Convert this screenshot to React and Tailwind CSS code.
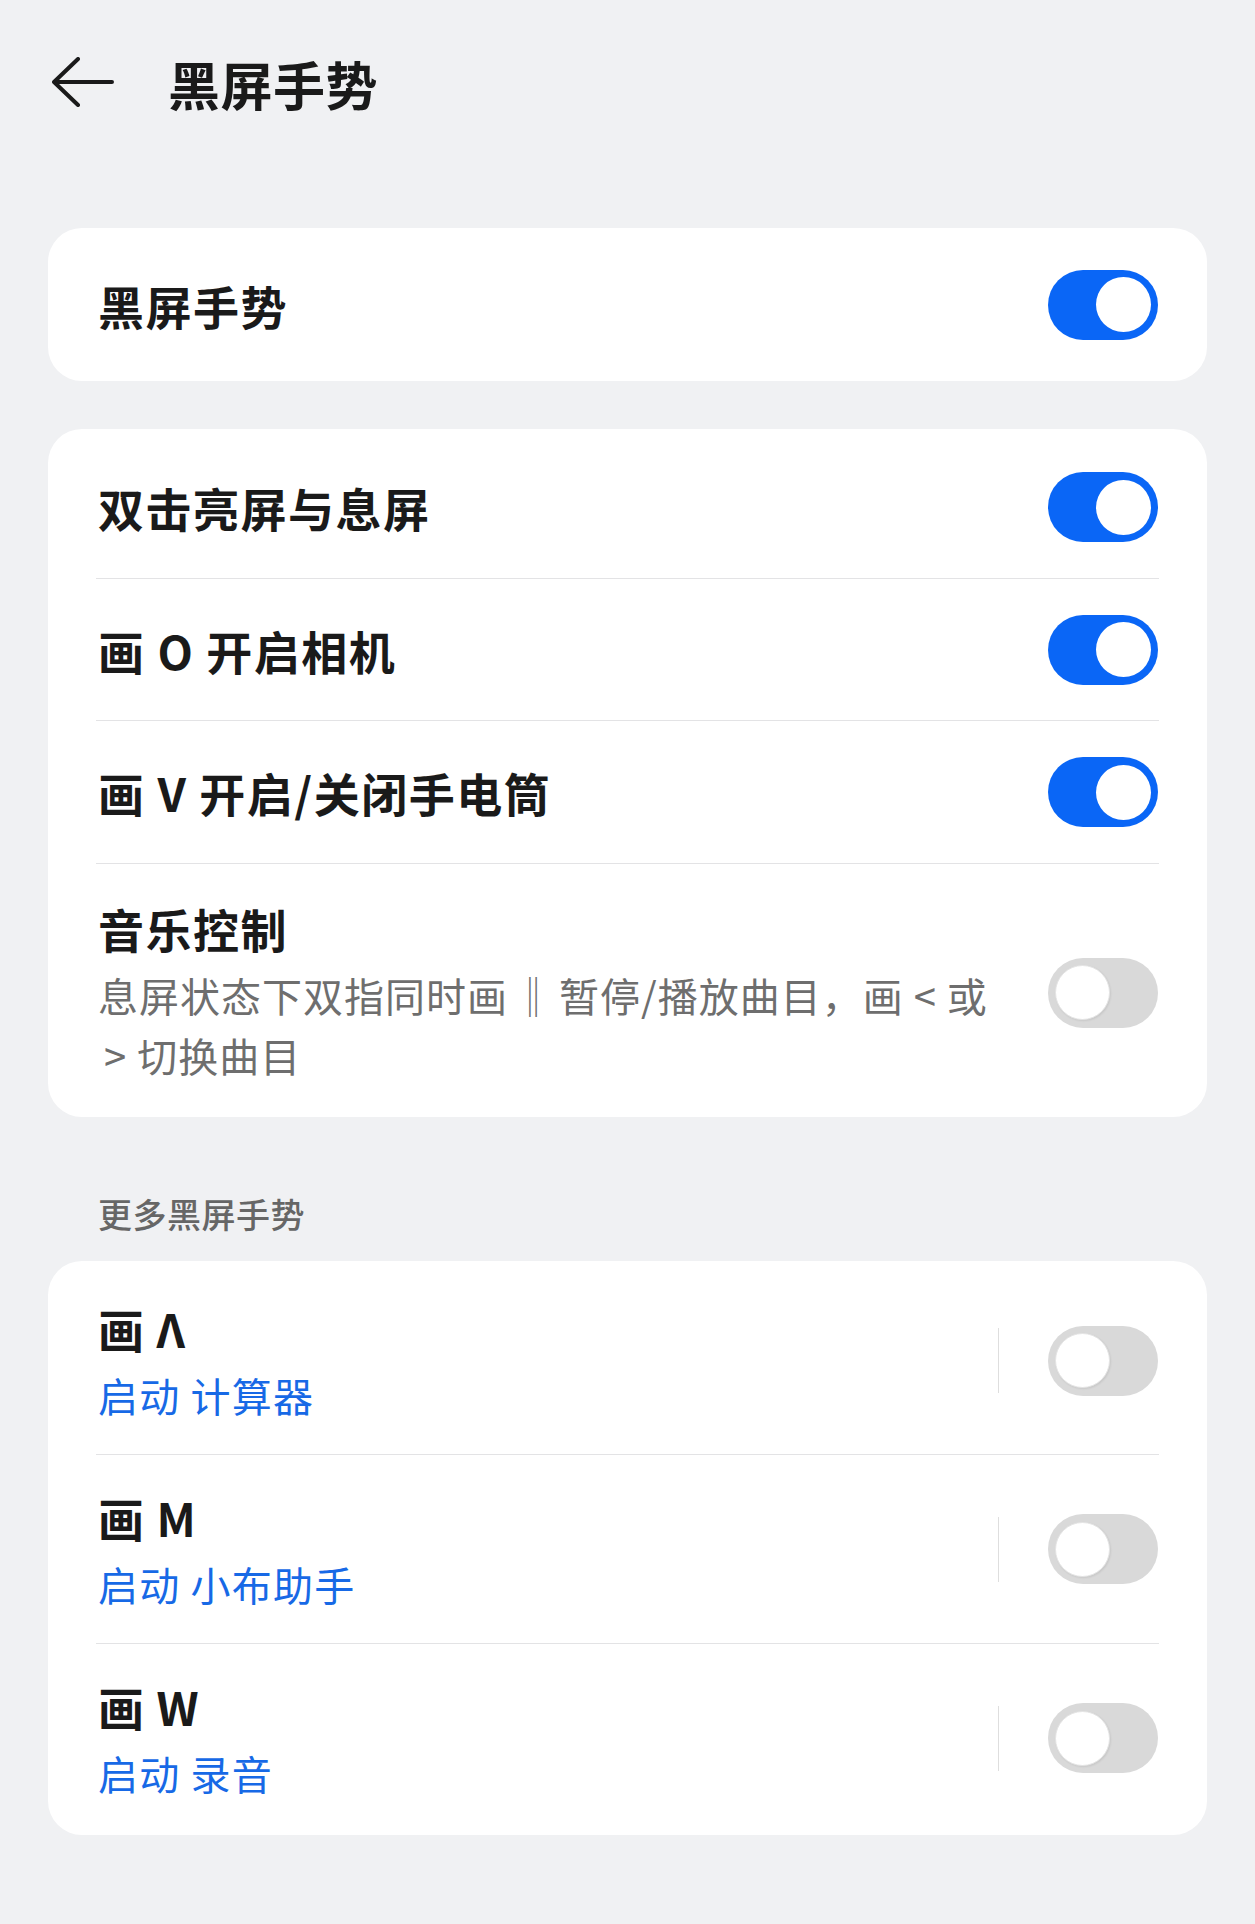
import React from "react";

const font = { fontFamily: '"Noto Sans CJK SC", "Noto Sans", sans-serif' };

function Toggle({ on }) {
  return on ? (
    <div className="flex h-[70px] w-[110px] shrink-0 items-center justify-end rounded-full bg-[#0a66f6] pr-[7px]">
      <div className="h-[55px] w-[55px] rounded-full bg-white" />
    </div>
  ) : (
    <div className="flex h-[70px] w-[110px] shrink-0 items-center justify-start rounded-full bg-[#d9d9d9] pl-[7px]">
      <div className="h-[55px] w-[55px] rounded-full border border-[#e4e4e4] bg-white shadow-[1px_1px_2px_rgba(0,0,0,0.08)]" />
    </div>
  );
}

function Divider() {
  return <div className="mx-[48px] h-px bg-[#e3e3e5]" />;
}

function SimpleRow({ title, on, h }) {
  return (
    <div className={`flex items-center justify-between pl-[50px] pr-[49px] ${h}`}>
      <div className="text-[46px] font-bold leading-[56px] tracking-[1.5px] text-[#1a1a1a]">{title}</div>
      <Toggle on={on} />
    </div>
  );
}

function GestureRow({ letter, action, h }) {
  return (
    <div className={`flex items-center justify-between pl-[50px] pr-[49px] ${h}`}>
      <div className="flex flex-col">
        <div className="text-[46px] font-bold leading-[56px] tracking-[1px] text-[#1a1a1a]">
          画 {letter}
        </div>
        <div className="mt-[13px] text-[40px] leading-[52px] tracking-[1.2px] text-[#1769e6]">{action}</div>
      </div>
      <div className="flex items-center">
        <div className="mr-[49px] h-[65px] w-px bg-[#dedede]" />
        <Toggle on={false} />
      </div>
    </div>
  );
}

export default function App() {
  return (
    <div className="min-h-[1924px] w-full bg-[#f0f1f3]" style={font}>
      {/* Header */}
      <div className="flex h-[164px] items-center">
        <svg className="ml-[52px]" width="62" height="50" viewBox="0 0 62 50" fill="none">
          <path d="M60 25 H2 M26 2 L2 25 L26 48" stroke="#1a1a1a" strokeWidth="4" strokeLinecap="round" strokeLinejoin="round" />
        </svg>
        <div className="ml-[54px] mt-[4px] text-[52px] font-bold leading-[64px] tracking-[0.5px] text-[#1a1a1a]">黑屏手势</div>
      </div>

      {/* Card 1 */}
      <div className="mx-[48px] mt-[64px] flex h-[153px] items-center justify-between rounded-[34px] bg-white pl-[50px] pr-[49px]">
        <div className="text-[46px] font-bold leading-[56px] tracking-[1.5px] text-[#1a1a1a]">黑屏手势</div>
        <Toggle on={true} />
      </div>

      {/* Card 2 */}
      <div className="mx-[48px] mt-[48px] rounded-[34px] bg-white pt-[7px]">
        <SimpleRow title="双击亮屏与息屏" on={true} h="h-[142px]" />
        <Divider />
        <SimpleRow title="画 O 开启相机" on={true} h="h-[141px]" />
        <Divider />
        <SimpleRow title="画 V 开启/关闭手电筒" on={true} h="h-[142px]" />
        <Divider />
        <div className="flex items-center justify-between pb-[32px] pl-[50px] pr-[49px] pt-[36px]">
          <div className="flex flex-col">
            <div className="text-[46px] font-bold leading-[56px] tracking-[1.5px] text-[#1a1a1a]">音乐控制</div>
            <div className="mt-[9px] text-[40px] leading-[60px] tracking-[1px] text-[#6e6e6e]">
              息屏状态下双指同时画<span className="mx-[5px]">‖</span>暂停/播放曲目，画 &lt; 或
              <br />
              <span className="ml-[6px]">&gt; 切换曲目</span>
            </div>
          </div>
          <Toggle on={false} />
        </div>
      </div>

      {/* Section header */}
      <div className="ml-[98px] mt-[73px] text-[34px] font-medium leading-[48px] tracking-[0.5px] text-[#666666]">
        更多黑屏手势
      </div>

      {/* Card 3 */}
      <div className="mx-[48px] mt-[23px] rounded-[34px] bg-white pb-[3px] pt-[6px]">
        <GestureRow letter="Λ" action="启动 计算器" h="h-[187px]" />
        <Divider />
        <GestureRow letter="M" action="启动 小布助手" h="h-[188px]" />
        <Divider />
        <GestureRow letter="W" action="启动 录音" h="h-[188px]" />
      </div>
    </div>
  );
}
